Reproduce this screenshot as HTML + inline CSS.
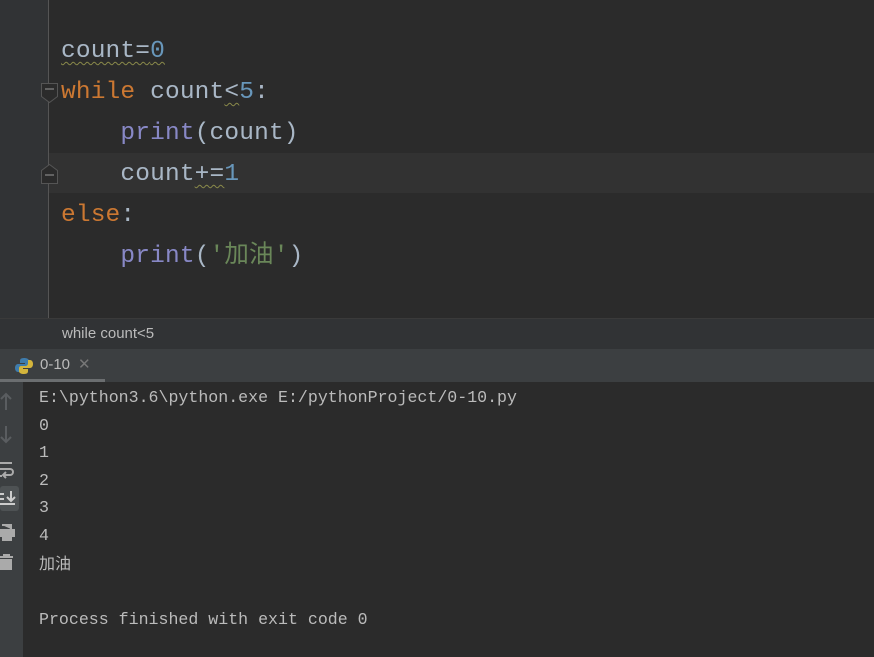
<!DOCTYPE html>
<html><head><meta charset="utf-8"><style>
*{margin:0;padding:0;box-sizing:border-box}
body{width:874px;height:657px;background:#2b2b2b;position:relative;overflow:hidden;font-family:"Liberation Mono","Noto Sans CJK SC",monospace}
.gutter{position:absolute;left:0;top:0;width:49px;height:318px;background:#313335}
.gline{position:absolute;left:48px;top:0;width:1px;height:318px;background:#555}
.hl{position:absolute;left:49px;top:153px;width:825px;height:40px;background:#323232}
.code{position:absolute;left:61px;font-size:24.5px;line-height:41px;white-space:pre;color:#a9b7c6;letter-spacing:0.15px}
.k{color:#cc7832}.n{color:#6897bb}.f{color:#8888c6}.s{color:#6a8759}
.w{text-decoration:underline wavy #8a8a4a;text-decoration-thickness:1px;text-underline-offset:4px}
.crumb{position:absolute;left:0;top:318px;width:874px;height:31px;background:#313335;border-top:1px solid #3a3a3a;color:#bbb;font-family:"Liberation Sans",sans-serif;font-size:15px;padding-left:62px;line-height:30px}
.tabs{position:absolute;left:0;top:349px;width:874px;height:33px;background:#3c3f41}
.tab{position:absolute;left:0;top:0;width:105px;height:33px;border-bottom:3px solid #6b6e70;color:#bbb;font-family:"Liberation Sans",sans-serif;font-size:15px;line-height:32px;padding-left:40px}
.tab .x{color:#777;margin-left:8px}
.tb{position:absolute;left:0;top:382px;width:23px;height:275px;background:#3c3f41}
.con{position:absolute;left:39px;top:384px;font-size:16.6px;line-height:27.5px;color:#bbbbbb;white-space:pre}
</style></head><body>
<div class="gutter"></div><div class="hl"></div><div class="gline"></div>
<svg style="position:absolute;left:40px;top:82px" width="20" height="22"><path d="M1.5 1.5h16v13l-8 6l-8-6z" fill="#2b2b2b" stroke="#555"/><path d="M5 7h9" stroke="#999"/></svg>
<svg style="position:absolute;left:40px;top:163px" width="20" height="22"><path d="M1.5 20.5h16v-13l-8-6l-8 6z" fill="#2b2b2b" stroke="#555"/><path d="M5 12h9" stroke="#999"/></svg>
<div class="code" style="top:31px"><span class="w">count=<span class="n">0</span></span></div>
<div class="code" style="top:72px"><span class="k">while</span> count<span class="w">&lt;</span><span class="n">5</span>:</div>
<div class="code" style="top:113px">    <span class="f">print</span>(count)</div>
<div class="code" style="top:154px">    count<span class="w">+=</span><span class="n">1</span></div>
<div class="code" style="top:195px"><span class="k">else</span>:</div>
<div class="code" style="top:236px">    <span class="f">print</span>(<span class="s">'加油'</span>)</div>
<div class="crumb">while count&lt;5</div>
<div class="tabs"><div class="tab">0-10<span class="x">✕</span></div>
<svg style="position:absolute;left:15px;top:8px" width="18" height="18"><path d="M9 1c-4 0-4 2-4 3v2h5v1H3c-2 0-3 2-3 4s1 4 3 4h2v-3c0-2 1-3 3-3h4c1 0 2-1 2-2V4c0-2-2-3-5-3z" fill="#3f7cac"/><path d="M9 17c4 0 4-2 4-3v-2H8v-1h7c2 0 3-2 3-4s-1-4-3-4h-2v3c0 2-1 3-3 3H6c-1 0-2 1-2 2v3c0 2 2 3 5 3z" fill="#d4b53c"/></svg>
</div>
<div class="tb"></div>
<svg style="position:absolute;left:0;top:390px" width="23" height="190" fill="none" stroke="#5a5d60" stroke-width="2">
<path d="M6 20V4M1 9l5-5 5 5"/><path d="M6 36v16M1 47l5 5 5-5"/>
<path d="M0 73h12M0 79h10a3 3 0 0 1 0 6H4M6 82l-3 3 3 3M0 86h2" stroke="#aaa"/>
<rect x="0" y="96" width="19" height="25" rx="3" fill="#4e5254" stroke="none"/>
<path d="M0 104h4M0 109h4M11 101v10M7 107l4 4 4-4M0 114h15" stroke="#ccc"/>
<path d="M2 135h9v4M0 140h14v6H0z M3 146v4h8v-4" stroke="#aaa" fill="#aaa"/>
<path d="M0 167h13M4 167v-2h5v2M1 170h10v9H1z" stroke="#aaa" fill="#aaa"/>
</svg>
<div class="con">E:\python3.6\python.exe E:/pythonProject/0-10.py
0
1
2
3
4
<span style="font-family:'Noto Sans CJK SC',sans-serif;font-size:16px">加油</span>

Process finished with exit code 0</div>
</body></html>
